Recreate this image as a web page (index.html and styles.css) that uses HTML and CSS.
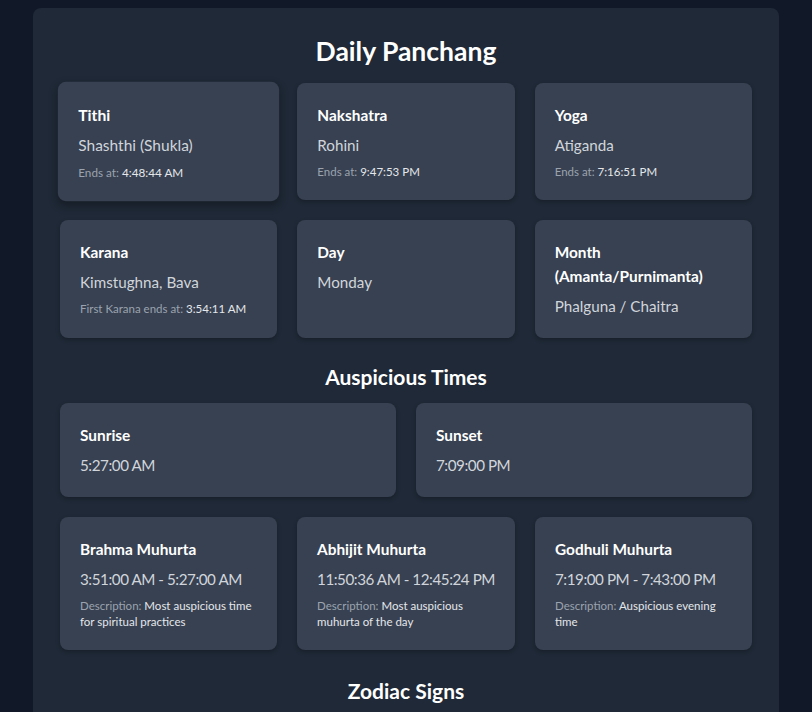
FILE: index.html
```html
<!DOCTYPE html>
<html lang="en">
<head>
<meta charset="utf-8">
<title>Daily Panchang</title>
<link rel="stylesheet" href="styles.css">
</head>
<body>
<main class="panel">
  <h1 class="page-title">Daily Panchang</h1>

  <section class="grid grid-3">
    <div class="card is-hover">
      <h3 class="card-title">Tithi</h3>
      <p class="card-value">Shashthi (Shukla)</p>
      <p class="card-note"><span class="note-label">Ends at:</span> 4:48:44 AM</p>
    </div>
    <div class="card">
      <h3 class="card-title">Nakshatra</h3>
      <p class="card-value">Rohini</p>
      <p class="card-note"><span class="note-label">Ends at:</span> 9:47:53 PM</p>
    </div>
    <div class="card">
      <h3 class="card-title">Yoga</h3>
      <p class="card-value">Atiganda</p>
      <p class="card-note"><span class="note-label">Ends at:</span> 7:16:51 PM</p>
    </div>
    <div class="card">
      <h3 class="card-title">Karana</h3>
      <p class="card-value">Kimstughna, Bava</p>
      <p class="card-note"><span class="note-label">First Karana ends at:</span> 3:54:11 AM</p>
    </div>
    <div class="card">
      <h3 class="card-title">Day</h3>
      <p class="card-value">Monday</p>
    </div>
    <div class="card">
      <h3 class="card-title">Month (Amanta/Purnimanta)</h3>
      <p class="card-value">Phalguna / Chaitra</p>
    </div>
  </section>

  <h2 class="section-title">Auspicious Times</h2>
  <section class="grid grid-2">
    <div class="card">
      <h3 class="card-title">Sunrise</h3>
      <p class="card-value time">5:27:00 AM</p>
    </div>
    <div class="card">
      <h3 class="card-title">Sunset</h3>
      <p class="card-value time">7:09:00 PM</p>
    </div>
  </section>
  <section class="grid grid-3 grid-spaced">
    <div class="card">
      <h3 class="card-title">Brahma Muhurta</h3>
      <p class="card-value time">3:51:00 AM - 5:27:00 AM</p>
      <p class="card-note"><span class="note-label">Description:</span> Most auspicious time for spiritual practices</p>
    </div>
    <div class="card">
      <h3 class="card-title">Abhijit Muhurta</h3>
      <p class="card-value time">11:50:36 AM - 12:45:24 PM</p>
      <p class="card-note"><span class="note-label">Description:</span> Most auspicious muhurta of the day</p>
    </div>
    <div class="card">
      <h3 class="card-title">Godhuli Muhurta</h3>
      <p class="card-value time">7:19:00 PM - 7:43:00 PM</p>
      <p class="card-note"><span class="note-label">Description:</span> Auspicious evening time</p>
    </div>
  </section>

  <h2 class="section-title section-title-lg">Zodiac Signs</h2>
  <section class="grid grid-2">
    <div class="card">
      <h3 class="card-title">Sun Sign</h3>
      <p class="card-value">Pisces</p>
    </div>
    <div class="card">
      <h3 class="card-title">Moon Sign</h3>
      <p class="card-value">Taurus</p>
    </div>
  </section>
</main>
</body>
</html>
```

FILE: styles.css
```css
* { box-sizing: border-box; }

html, body {
  margin: 0;
  padding: 0;
}

body {
  background: #111827;
  font-family: Lato, "Noto Sans", sans-serif;
  color: #ffffff;
  padding-top: 8px;
}

.panel {
  width: 746px;
  margin: 0 auto;
  background: #1f2937;
  border-radius: 8px;
  padding: 27px;
}

.page-title {
  margin: 0 0 16px;
  font-size: 26.5px;
  line-height: 32px;
  font-weight: 700;
  text-align: center;
  color: #ffffff;
}

.section-title {
  margin: 25px 0 12px;
  font-size: 21px;
  line-height: 28px;
  font-weight: 700;
  text-align: center;
  color: #ffffff;
}

.section-title-lg {
  margin-top: 27px;
}

.grid {
  display: grid;
  gap: 20px;
}

.grid-3 { grid-template-columns: repeat(3, 1fr); }
.grid-2 { grid-template-columns: repeat(2, 1fr); }
.grid-spaced { margin-top: 20px; }

.card {
  background: #374151;
  border-radius: 8px;
  padding: 20px;
  box-shadow: 0 2px 4px rgba(0, 0, 0, 0.25);
}

.card.is-hover {
  transform: scale(1.02);
  box-shadow: 0 4px 8px rgba(0, 0, 0, 0.3);
}

.card-title {
  margin: 0 0 6px;
  font-size: 15.4px;
  line-height: 24px;
  font-weight: 700;
  color: #ffffff;
}

.card-value {
  margin: 0;
  font-size: 15.2px;
  line-height: 24px;
  color: #d1d5db;
}

.card-value.time {
  letter-spacing: -0.45px;
  white-space: nowrap;
}

.card-note {
  margin: 7px 0 0;
  font-size: 11.5px;
  line-height: 16px;
  color: #e5e7eb;
}

.note-label {
  color: #9ca3af;
}
```
